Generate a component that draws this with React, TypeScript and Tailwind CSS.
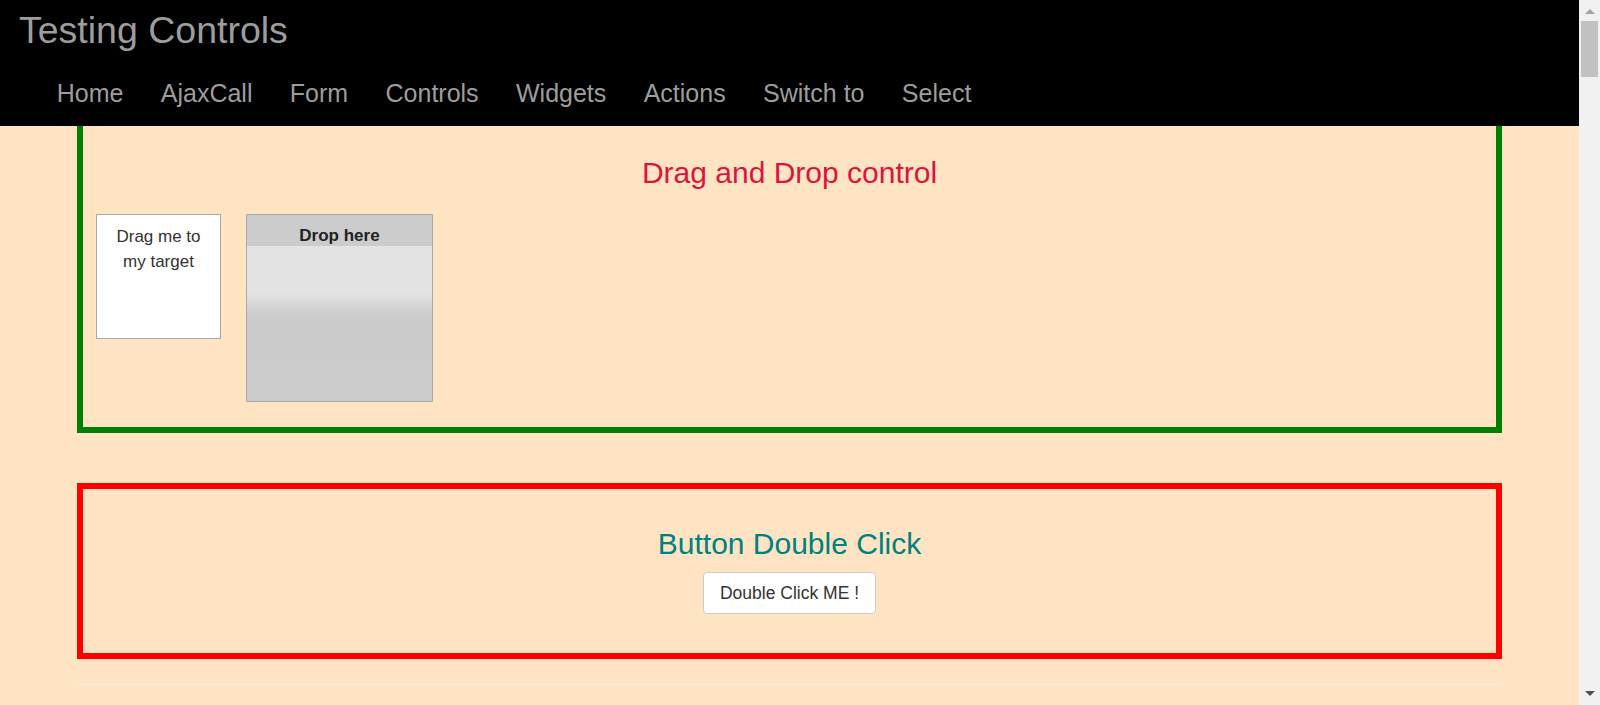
const navItems = ["Home", "AjaxCall", "Form", "Controls", "Widgets", "Actions", "Switch to", "Select"];

function Scrollbar() {
  return (
    <div className="flex w-[21px] shrink-0 flex-col items-center bg-[#f1f1f1]">
      <div className="mt-[9px] h-0 w-0 border-x-[5px] border-b-[5px] border-x-transparent border-b-[#a3a3a3]" />
      <div className="mt-[7px] h-[56px] w-[17px] bg-[#c1c1c1]" />
      <div className="flex-1" />
      <div className="mb-[9px] h-0 w-0 border-x-[5px] border-t-[5px] border-x-transparent border-t-[#505050]" />
    </div>
  );
}

function DragDrop() {
  return (
    <section className="mx-[77px] border-x-[6px] border-b-[6px] border-[#008000] px-[13px] pb-[25px] pt-[30px]">
      <h2 className="text-center text-[30px] leading-[33px] text-[#dc143c]">Drag and Drop control</h2>
      <div className="mt-[25px] flex items-start gap-[25px]">
        <div className="h-[125px] w-[125px] border border-[#aaaaaa] bg-white pt-[9px] text-center text-[17px] leading-[25px] text-[#333333]">
          Drag me to
          <br />
          my target
        </div>
        <div className="flex h-[188px] w-[187px] flex-col border border-[#aaaaaa] bg-[#cccccc]">
          <div className="h-[31px] pt-[8px] text-center text-[17px] font-bold leading-[25px] text-[#222222]">Drop here</div>
          <div className="flex-1 bg-[linear-gradient(to_bottom,#e3e3e3_0px,#e3e3e3_47px,#cbcbcb_69px,#cccccc_100%)]" />
        </div>
      </div>
    </section>
  );
}

function DoubleClick() {
  return (
    <section className="mx-[77px] mt-[50px] flex flex-col items-center border-[6px] border-[#ff0000] pb-[39px] pt-[38px]">
      <h2 className="text-center text-[30px] leading-[33px] text-[#008080]">Button Double Click</h2>
      <button className="mt-[12px] h-[42px] rounded-[4px] border border-[#cccccc] bg-white px-[16px] text-[17.5px] text-[#333333]">
        Double Click ME !
      </button>
    </section>
  );
}

export default function App() {
  return (
    <div className="flex h-screen w-full overflow-hidden bg-[#ffe4c4] font-['Liberation_Sans',Arial,sans-serif]">
      <div className="flex min-w-0 flex-1 flex-col">
        <header className="h-[126px] shrink-0 bg-black text-[#9d9d9d]">
          <div className="pl-[19px] pt-[10px] text-[37.5px] leading-[41px]">Testing Controls</div>
          <nav className="mt-[27px] flex pl-[38px] text-[25px] leading-[30px]">
            {navItems.map((item) => (
              <a key={item} className="px-[18.7px]">
                {item}
              </a>
            ))}
          </nav>
        </header>
        <main className="flex-1">
          <DragDrop />
          <DoubleClick />
          <hr className="mx-[77px] mt-[25px] border-0 border-t border-[#eeeeee]" />
        </main>
      </div>
      <Scrollbar />
    </div>
  );
}
